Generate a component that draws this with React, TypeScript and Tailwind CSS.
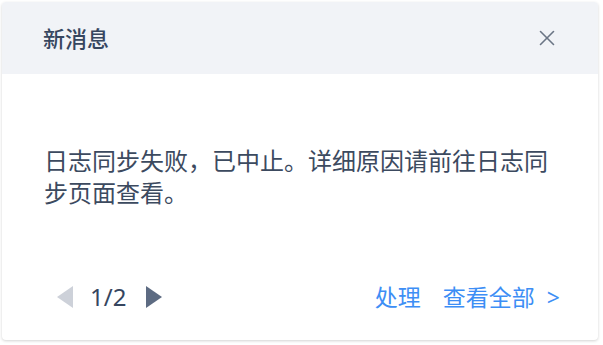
import { X } from "lucide-react";

export default function App() {
  return (
    <main
      className="h-[345px] w-[603px] bg-white p-[2px]"
      style={{ fontFamily: '"Noto Sans", "Noto Sans CJK SC", sans-serif' }}
    >
      <div className="flex h-[338px] w-[596px] flex-col overflow-hidden rounded-[4px] bg-white shadow-[0_1px_3px_rgba(0,0,0,0.18)]">
        <div className="flex h-[72px] items-center justify-between bg-[#f1f3f7] pl-[41px] pr-[38px]">
          <h1 className="text-[22px] font-medium text-[#36465f]">新消息</h1>
          <button className="text-[#6b7585]" aria-label="关闭">
            <X className="h-[26px] w-[26px]" strokeWidth={1.5} />
          </button>
        </div>
        <div className="px-[42px] pt-[71px]">
          <p className="text-[24px] leading-[32px] text-[#3c4a5f]">
            日志同步失败，已中止。详细原因请前往日志同步页面查看。
          </p>
        </div>
        <div className="mt-[72px] flex h-[32px] items-center justify-between pl-[55px] pr-[38px]">
          <div className="flex items-center">
            <svg width="16" height="22" viewBox="0 0 16 22" aria-hidden>
              <path d="M16 0 L0 11 L16 22 Z" fill="#cdd1d9" />
            </svg>
            <span className="ml-[17px] mr-[20px] text-[24px] text-[#36465f]">1/2</span>
            <svg width="16" height="22" viewBox="0 0 16 22" aria-hidden>
              <path d="M0 0 L16 11 L0 22 Z" fill="#5d6b82" />
            </svg>
          </div>
          <div className="flex items-center gap-[22px] text-[23px] text-[#3d8ef5]">
            <a href="#">处理</a>
            <a href="#" className="flex items-center">
              查看全部<span className="ml-[12px]">&gt;</span>
            </a>
          </div>
        </div>
      </div>
    </main>
  );
}
